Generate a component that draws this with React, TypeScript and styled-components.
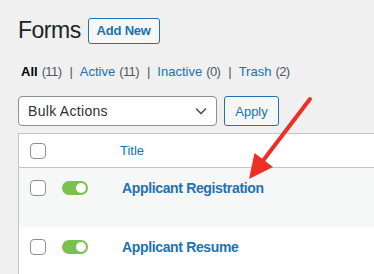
import styled, { createGlobalStyle } from "styled-components";

const GlobalStyle = createGlobalStyle`
    html, body {
        margin: 0;
        padding: 0;
        background: #f0f0f1;
        overflow: hidden;
    }
    body {
        font-family: "Liberation Sans", Arial, sans-serif;
        color: #3c434a;
    }
`;

const Page = styled.div`
    position: relative;
    width: 374px;
    height: 274px;
    padding: 18px 0 0 18px;
    box-sizing: border-box;
    overflow: hidden;
`;

const HeadingRow = styled.div`
    display: flex;
    align-items: center;
    gap: 7px;
    height: 25px;
`;

const Heading = styled.h1`
    margin: 0;
    font-size: 23px;
    font-weight: 400;
    color: #1d2327;
    letter-spacing: -0.5px;
`;

const OutlineButton = styled.button<{ $bold?: boolean }>`
    font-family: inherit;
    font-size: 13px;
    font-weight: ${(p) => (p.$bold ? 700 : 400)};
    color: #2271b1;
    background: #f6f7f7;
    border: 1px solid #2271b1;
    border-radius: 3px;
    padding: 0;
    box-sizing: border-box;
    white-space: nowrap;
    cursor: pointer;
`;

const AddNew = styled(OutlineButton)`
    height: 26px;
    width: 72px;
    letter-spacing: -0.2px;
`;

const Views = styled.ul`
    display: flex;
    list-style: none;
    margin: 20px 0 0 3px;
    padding: 0;
    font-size: 13px;
    height: 16px;
    align-items: center;
`;

const ViewItem = styled.li`
    display: flex;
    align-items: center;
`;

const ViewLink = styled.a<{ $current?: boolean }>`
    color: ${(p) => (p.$current ? "#000" : "#2271b1")};
    font-weight: ${(p) => (p.$current ? 700 : 400)};
    text-decoration: none;
`;

const Count = styled.span`
    color: #50575e;
    margin-left: 4px;
    letter-spacing: -0.6px;
`;

const Sep = styled.span`
    color: #50575e;
    margin: 0 7px 0 8px;
`;

const ActionsRow = styled.div`
    display: flex;
    gap: 7px;
    margin-top: 17px;
`;

const Select = styled.div`
    width: 199px;
    height: 30px;
    box-sizing: border-box;
    border: 1px solid #8c8f94;
    border-radius: 4px;
    background: #fff;
    display: flex;
    align-items: center;
    justify-content: space-between;
    padding: 0 9px 0 9px;
    font-size: 14px;
    color: #2c3338;
    letter-spacing: 0.3px;
`;

const ApplyButton = styled(OutlineButton)`
    height: 30px;
    width: 55px;
    font-size: 13px;
`;

const Table = styled.div`
    margin-top: 7px;
    width: 420px;
    background: #fff;
    border: 1px solid #c3c4c7;
    border-right: none;
`;

const HeaderRow = styled.div`
    display: flex;
    align-items: center;
    height: 33px;
    padding-left: 11px;
    border-bottom: 1px solid #c3c4c7;
`;

const Row = styled.div<{ $alt?: boolean }>`
    display: flex;
    align-items: flex-start;
    height: 59px;
    box-sizing: border-box;
    padding: 12px 0 0 11px;
    background: ${(p) => (p.$alt ? "#f6f7f7" : "#fff")};
`;

const Check = styled.span`
    display: block;
    width: 16px;
    height: 16px;
    box-sizing: border-box;
    border: 1px solid #8c8f94;
    border-radius: 4px;
    background: #fff;
    flex-shrink: 0;
`;

const ColumnLink = styled.a`
    margin-left: 74px;
    font-size: 13px;
    color: #2271b1;
    text-decoration: none;
    line-height: 16px;
`;

const Toggle = styled.span`
    position: relative;
    display: block;
    width: 26px;
    height: 14px;
    margin: 1px 0 0 16px;
    border-radius: 7px;
    background: #7ac14d;
    flex-shrink: 0;
    &::after {
        content: "";
        position: absolute;
        right: 2px;
        top: 2px;
        width: 10px;
        height: 10px;
        border-radius: 50%;
        background: #fff;
    }
`;

const FormTitle = styled.a`
    margin-left: 34px;
    font-size: 14px;
    font-weight: 700;
    color: #2271b1;
    text-decoration: none;
    line-height: 16px;
    letter-spacing: -0.35px;
`;

const Arrow = styled.svg`
    position: absolute;
    left: 0;
    top: 0;
    pointer-events: none;
`;

const Chevron = () => (
    <svg width="12" height="8" viewBox="0 0 12 8">
        <path d="M1 1.5 L6 6.5 L11 1.5" fill="none" stroke="#50575e" strokeWidth="1.6" />
    </svg>
);

const views = [
    { label: "All", count: 11, current: true },
    { label: "Active", count: 11 },
    { label: "Inactive", count: 0 },
    { label: "Trash", count: 2 },
];

const forms = ["Applicant Registration", "Applicant Resume"];

export default function App() {
    return (
        <>
            <GlobalStyle />
            <Page>
                <HeadingRow>
                    <Heading>Forms</Heading>
                    <AddNew $bold>Add New</AddNew>
                </HeadingRow>
                <Views>
                    {views.map((v, i) => (
                        <ViewItem key={v.label}>
                            <ViewLink $current={v.current}>{v.label}</ViewLink>
                            <Count>({v.count})</Count>
                            {i < views.length - 1 && <Sep>|</Sep>}
                        </ViewItem>
                    ))}
                </Views>
                <ActionsRow>
                    <Select>
                        Bulk Actions
                        <Chevron />
                    </Select>
                    <ApplyButton>Apply</ApplyButton>
                </ActionsRow>
                <Table>
                    <HeaderRow>
                        <Check />
                        <ColumnLink>Title</ColumnLink>
                    </HeaderRow>
                    {forms.map((name, i) => (
                        <Row key={name} $alt={i % 2 === 0}>
                            <Check />
                            <Toggle />
                            <FormTitle>{name}</FormTitle>
                        </Row>
                    ))}
                </Table>
                <Arrow width="374" height="274" viewBox="0 0 374 274">
                    <line x1="310" y1="99" x2="262" y2="162" stroke="#ef2f27" strokeWidth="4" strokeLinecap="round" />
                    <polygon points="249,179 254.5,153 273,167" fill="#ef2f27" />
                </Arrow>
            </Page>
        </>
    );
}
